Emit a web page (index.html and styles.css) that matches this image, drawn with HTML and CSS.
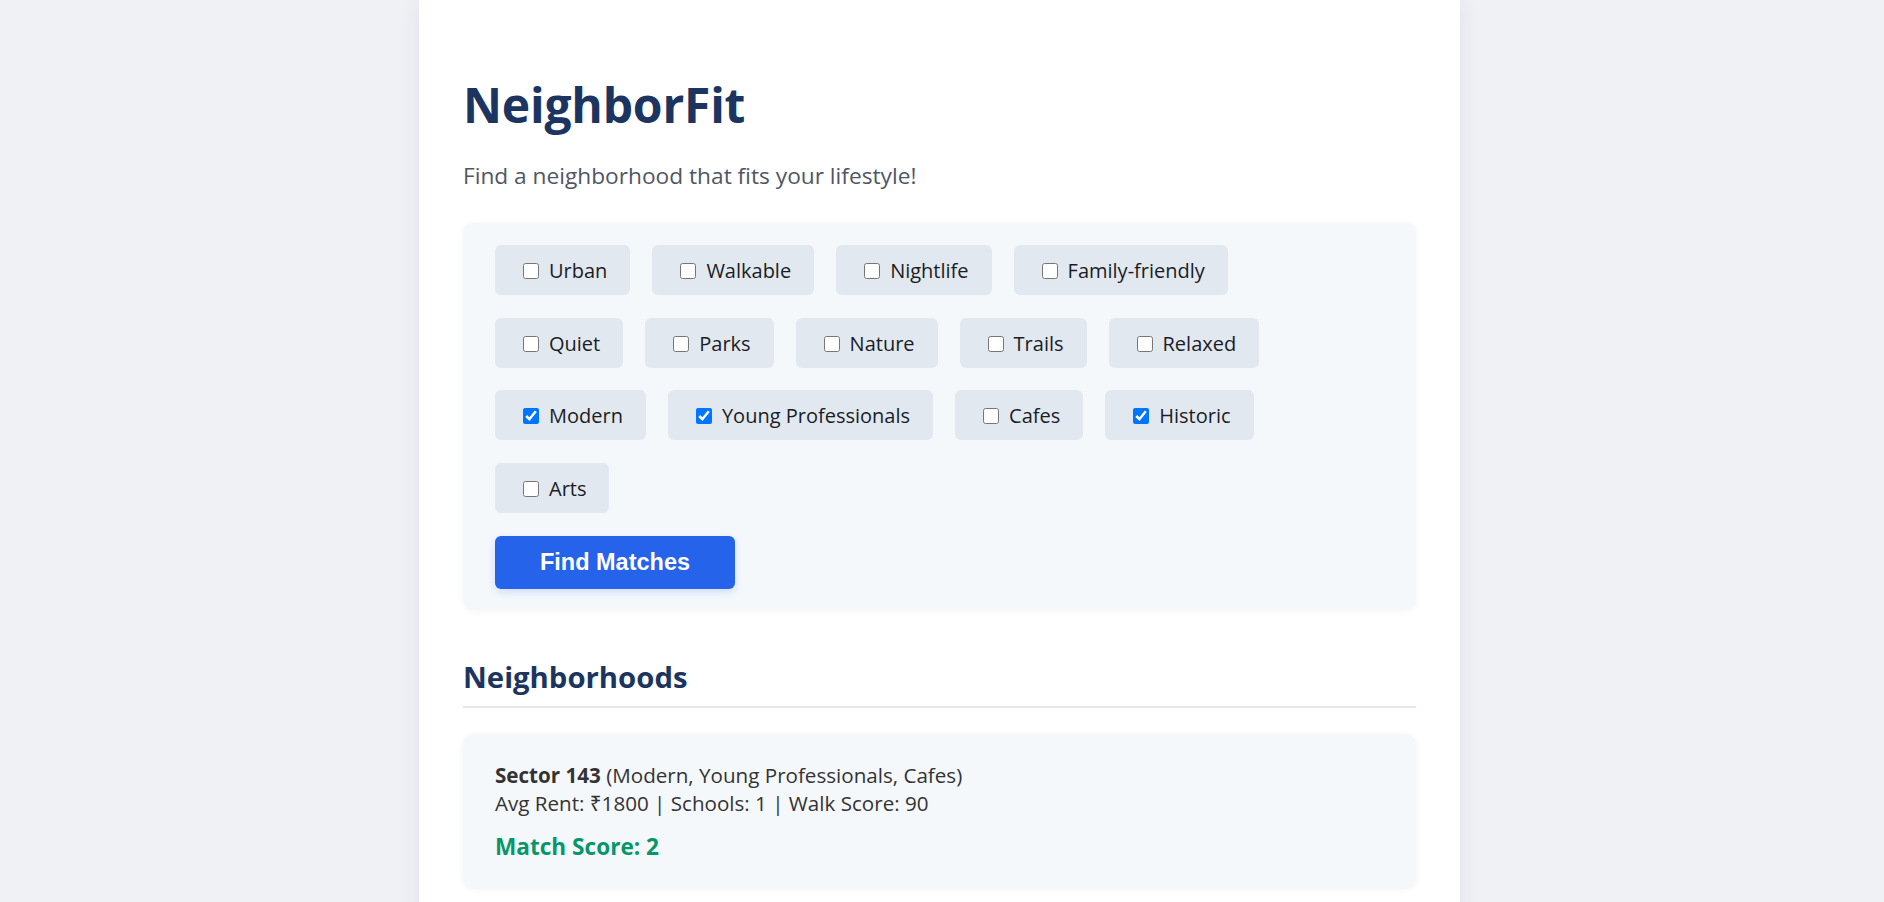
FILE: index.html
```html
<!DOCTYPE html>
<html lang="en">
<head>
<meta charset="utf-8">
<title>NeighborFit</title>
<link rel="stylesheet" href="styles.css">
</head>
<body>
<main class="container">
  <h1 class="title">NeighborFit</h1>
  <p class="subtitle">Find a neighborhood that fits your lifestyle!</p>

  <section class="filters">
    <div class="tags">
      <label class="tag"><input type="checkbox">Urban</label>
      <label class="tag"><input type="checkbox">Walkable</label>
      <label class="tag"><input type="checkbox">Nightlife</label>
      <label class="tag"><input type="checkbox">Family-friendly</label>
      <label class="tag"><input type="checkbox">Quiet</label>
      <label class="tag"><input type="checkbox">Parks</label>
      <label class="tag"><input type="checkbox">Nature</label>
      <label class="tag"><input type="checkbox">Trails</label>
      <label class="tag"><input type="checkbox">Relaxed</label>
      <label class="tag"><input type="checkbox" checked>Modern</label>
      <label class="tag"><input type="checkbox" checked>Young Professionals</label>
      <label class="tag"><input type="checkbox">Cafes</label>
      <label class="tag"><input type="checkbox" checked>Historic</label>
      <label class="tag"><input type="checkbox">Arts</label>
    </div>
    <button class="find-btn" type="button">Find Matches</button>
  </section>

  <h2 class="section-title">Neighborhoods</h2>

  <div class="card">
    <div class="card-line"><strong>Sector 143</strong> (Modern, Young Professionals, Cafes)</div>
    <div class="card-line">Avg Rent: ₹1800 | Schools: 1 | Walk Score: 90</div>
    <div class="score">Match Score: 2</div>
  </div>
</main>
</body>
</html>
```

FILE: styles.css
```css
* {
  box-sizing: border-box;
}

html,
body {
  margin: 0;
  padding: 0;
}

body {
  padding-right: 5px;
  background: #f0f1f5;
  font-family: "Open Sans", "Noto Sans", sans-serif;
  color: #333333;
}

.container {
  width: 1041px;
  min-height: 100vh;
  margin: 0 auto;
  padding: 76px 44px 40px 44px;
  background: #ffffff;
  box-shadow: 0 0 22px rgba(40, 50, 80, 0.08);
}

.title {
  margin: 0;
  font-size: 48px;
  line-height: 58px;
  font-weight: 700;
  color: #1c3560;
  letter-spacing: -0.2px;
}

.subtitle {
  margin: 28px 0 0 0;
  font-size: 22.7px;
  line-height: 28px;
  color: #4f5666;
}

.filters {
  margin-top: 33px;
  padding: 22px 32px 21px 32px;
  background: #f5f8fb;
  border-radius: 10px;
  box-shadow: 0 1px 6px rgba(30, 50, 90, 0.05);
}

.tags {
  display: flex;
  flex-wrap: wrap;
  column-gap: 22px;
  row-gap: 22.5px;
  max-width: 860px;
}

.tag {
  display: inline-flex;
  align-items: center;
  padding: 12px 23px 10px 24px;
  background: #e2e8f0;
  border-radius: 6px;
  font-size: 20px;
  line-height: 28px;
  color: #1a1d24;
  cursor: pointer;
}

.tag input {
  width: 16px;
  height: 16px;
  margin: 0 10px 0 4px;
}

.find-btn {
  display: block;
  margin-top: 23px;
  width: 240px;
  height: 53px;
  padding: 0;
  border: none;
  border-radius: 6px;
  background: #2563eb;
  color: #ffffff;
  font-family: "Liberation Sans", Arial, sans-serif;
  font-size: 23.5px;
  font-weight: 700;
  box-shadow: 0 3px 8px rgba(37, 99, 235, 0.18);
  cursor: pointer;
}

.section-title {
  margin: 49px 0 0 0;
  padding-bottom: 11px;
  border-bottom: 2px solid #e2e8f0;
  font-size: 29.3px;
  line-height: 36px;
  font-weight: 700;
  color: #1c3560;
}

.card {
  margin-top: 26px;
  padding: 27px 32px 27px 32px;
  background: #f5f8fb;
  border-radius: 10px;
  box-shadow: 0 1px 6px rgba(30, 50, 90, 0.06);
}

.card-line {
  font-size: 20.6px;
  line-height: 28px;
  color: #333333;
}

.card-line strong {
  font-weight: 700;
}

.score {
  margin-top: 16px;
  font-size: 22.6px;
  line-height: 28px;
  font-weight: 700;
  color: #079669;
}
```
